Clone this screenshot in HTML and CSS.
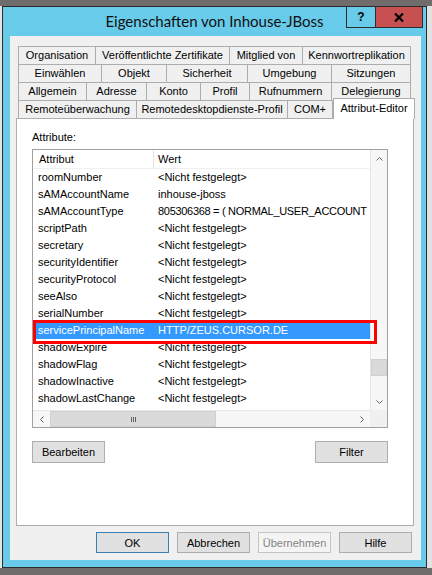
FILE: index.html
```html
<!DOCTYPE html>
<html lang="de">
<head>
<meta charset="utf-8">
<title>Eigenschaften von Inhouse-JBoss</title>
<link rel="stylesheet" href="styles.css">
</head>
<body>
<div class="screen">
  <div class="window">
    <div class="titlebar">
      <div class="tb-spacer"></div>
      <div class="title">Eigenschaften von Inhouse-JBoss</div>
      <div class="caption-btns">
        <div class="cbtn help">?</div>
        <div class="cbtn close">
          <svg width="10" height="9" viewBox="0 0 10 9"><path d="M1 0.5 L9 8.5 M9 0.5 L1 8.5" stroke="#000" stroke-width="2.2" fill="none"/></svg>
        </div>
      </div>
    </div>
    <div class="client">
      <div class="tabs">
        <div class="tabrow">
          <div class="tab w78">Organisation</div>
          <div class="tab w135">Veröffentlichte Zertifikate</div>
          <div class="tab w74">Mitglied von</div>
          <div class="tab w109">Kennwortreplikation</div>
        </div>
        <div class="tabrow">
          <div class="tab w84">Einwählen</div>
          <div class="tab w66">Objekt</div>
          <div class="tab w82">Sicherheit</div>
          <div class="tab w85">Umgebung</div>
          <div class="tab w80">Sitzungen</div>
        </div>
        <div class="tabrow">
          <div class="tab w69">Allgemein</div>
          <div class="tab w61">Adresse</div>
          <div class="tab w55">Konto</div>
          <div class="tab w50">Profil</div>
          <div class="tab w83">Rufnummern</div>
          <div class="tab w80">Delegierung</div>
        </div>
        <div class="tabrow">
          <div class="tab w119">Remoteüberwachung</div>
          <div class="tab w152">Remotedesktopdienste-Profil</div>
          <div class="tab w46">COM+</div>
          <div class="tab sel">Attribut-Editor</div>
        </div>
      </div>
      <div class="panel">
        <div class="label">Attribute:</div>
        <div class="listview">
          <div class="lv-content">
            <div class="lv-header">
              <div class="c1">Attribut</div>
              <div class="c2">Wert</div>
            </div>
            <div class="lv-rows">
              <div class="row"><div class="c1">roomNumber</div><div class="c2">&lt;Nicht festgelegt&gt;</div></div>
              <div class="row"><div class="c1">sAMAccountName</div><div class="c2">inhouse-jboss</div></div>
              <div class="row"><div class="c1">sAMAccountType</div><div class="c2 narrow">805306368 = ( NORMAL_USER_ACCOUNT</div></div>
              <div class="row"><div class="c1">scriptPath</div><div class="c2">&lt;Nicht festgelegt&gt;</div></div>
              <div class="row"><div class="c1">secretary</div><div class="c2">&lt;Nicht festgelegt&gt;</div></div>
              <div class="row"><div class="c1">securityIdentifier</div><div class="c2">&lt;Nicht festgelegt&gt;</div></div>
              <div class="row"><div class="c1">securityProtocol</div><div class="c2">&lt;Nicht festgelegt&gt;</div></div>
              <div class="row"><div class="c1">seeAlso</div><div class="c2">&lt;Nicht festgelegt&gt;</div></div>
              <div class="row"><div class="c1">serialNumber</div><div class="c2">&lt;Nicht festgelegt&gt;</div></div>
              <div class="row selected"><div class="c1">servicePrincipalName</div><div class="c2">HTTP/ZEUS.CURSOR.DE</div></div>
              <div class="row"><div class="c1">shadowExpire</div><div class="c2">&lt;Nicht festgelegt&gt;</div></div>
              <div class="row"><div class="c1">shadowFlag</div><div class="c2">&lt;Nicht festgelegt&gt;</div></div>
              <div class="row"><div class="c1">shadowInactive</div><div class="c2">&lt;Nicht festgelegt&gt;</div></div>
              <div class="row"><div class="c1">shadowLastChange</div><div class="c2">&lt;Nicht festgelegt&gt;</div></div>
            </div>
          </div>
          <div class="vscroll">
            <div class="sb-arrow"><svg width="7" height="4" viewBox="0 0 7 4"><path d="M0.5 3.5 L3.5 0.5 L6.5 3.5" stroke="#606060" fill="none"/></svg></div>
            <div class="v-track"><div class="v-thumb"></div></div>
            <div class="sb-arrow"><svg width="7" height="4" viewBox="0 0 7 4"><path d="M0.5 0.5 L3.5 3.5 L6.5 0.5" stroke="#606060" fill="none"/></svg></div>
          </div>
          <div class="hscroll">
            <div class="sb-arrow"><svg width="4" height="7" viewBox="0 0 4 7"><path d="M3.5 0.5 L0.5 3.5 L3.5 6.5" stroke="#606060" fill="none"/></svg></div>
            <div class="h-thumb"><span class="grip"></span><span class="grip"></span><span class="grip"></span></div>
            <div class="h-track"></div>
            <div class="sb-arrow"><svg width="4" height="7" viewBox="0 0 4 7"><path d="M0.5 0.5 L3.5 3.5 L0.5 6.5" stroke="#606060" fill="none"/></svg></div>
          </div>
          <div class="corner"></div>
          <div class="redbox"></div>
        </div>
        <div class="panel-btns">
          <div class="btn">Bearbeiten</div>
          <div class="btn">Filter</div>
        </div>
      </div>
      <div class="dlg-btns">
        <div class="btn default">OK</div>
        <div class="btn">Abbrechen</div>
        <div class="btn disabled">Übernehmen</div>
        <div class="btn">Hilfe</div>
      </div>
    </div>
  </div>
</div>
</body>
</html>
```
FILE: styles.css
```css
* { box-sizing: border-box; }
html, body { margin: 0; padding: 0; }
body {
  width: 432px;
  height: 575px;
  overflow: hidden;
  font-family: "Liberation Sans", Arial, sans-serif;
  font-size: 11px;
  color: #000;
}
.screen {
  height: 575px;
  padding: 6px 0 0 2px;
  background:
    linear-gradient(to bottom, #716c6c 0 6px, transparent 6px 568px, #716c6c 568px),
    linear-gradient(to right, #e6e6e6 0 2px, #716c6c 2px 427px, #e2e2e2 427px);
}
.window {
  width: 425px;
  height: 562px;
  border: 1px solid #2c2c2c;
  background: #68cbea;
  display: flex;
  flex-direction: column;
}
.titlebar {
  height: 29px;
  flex: none;
  display: grid;
  grid-template-columns: 1fr auto 1fr;
}
.title {
  font-family: Lato, "Noto Sans", sans-serif;
  font-size: 15px;
  line-height: 29px;
  color: #111;
  white-space: nowrap;
}
.caption-btns {
  justify-self: end;
  align-self: start;
  margin-right: 3px;
  display: flex;
  height: 21px;
  border: 1px solid #2c2c2c;
  border-top: 0;
}
.cbtn {
  height: 20px;
  display: flex;
  align-items: center;
  justify-content: center;
}
.help {
  width: 28px;
  font-family: "Liberation Sans", Arial, sans-serif;
  font-weight: bold;
  font-size: 12px;
}
.close {
  width: 47px;
  background: #c75050;
  border-left: 1px solid #2c2c2c;
}
.client {
  margin: 0 5px 0 7px;
  height: 524px;
  flex: none;
  background: #f0f0f0;
  padding-top: 10px;
  display: flex;
  flex-direction: column;
}
.tabs {
  padding-left: 8px;
  width: 404px;
}
.tabrow {
  display: flex;
  height: 18px;
}
.tab {
  height: 18px;
  border: 1px solid #adadad;
  border-bottom: 0;
  margin-left: -1px;
  background: #f0f0f0;
  text-align: center;
  line-height: 16px;
  white-space: nowrap;
  flex: none;
}
.tab:first-child { margin-left: 0; }
.w46 { width: 46px; } .w50 { width: 50px; } .w55 { width: 55px; } .w61 { width: 61px; }
.w66 { width: 66px; } .w69 { width: 69px; } .w74 { width: 74px; } .w78 { width: 78px; }
.w80 { width: 80px; } .w82 { width: 82px; } .w83 { width: 83px; } .w84 { width: 84px; }
.w85 { width: 85px; } .w109 { width: 109px; } .w119 { width: 119px; } .w135 { width: 135px; }
.w152 { width: 152px; }
.tab.sel {
  width: 82px;
  height: 21px;
  margin-top: -2px;
  margin-left: 0;
  background: #fff;
  position: relative;
  z-index: 2;
  line-height: 18px;
}
.panel {
  margin-left: 6px;
  width: 398px;
  height: 408px;
  background: #fff;
  border: 1px solid #adadad;
  padding: 12px 0 0 15px;
}
.label {
  line-height: 13px;
  height: 13px;
  margin-bottom: 5px;
}
.listview {
  position: relative;
  width: 356px;
  height: 279px;
  border: 1px solid #a0a0a0;
  display: grid;
  grid-template-columns: 337px 17px;
  grid-template-rows: 260px 17px;
}
.lv-content {
  overflow: hidden;
  background: #fff;
}
.lv-header {
  display: flex;
  height: 19px;
  line-height: 18px;
  border-bottom: 1px solid #f0f0f0;
}
.lv-header .c1 {
  width: 121px;
  padding-left: 6px;
  border-right: 1px solid #e5e5e5;
}
.lv-header .c2 { padding-left: 4px; }
.lv-rows { height: 241px; overflow: hidden; }
.row {
  display: flex;
  height: 17px;
  line-height: 17px;
  white-space: nowrap;
}
.row .c1 { width: 121px; padding-left: 5px; flex: none; }
.row .c2 { padding-left: 4px; flex: none; }
.row .c2.narrow { letter-spacing: -0.3px; }
.row.selected { background: #3399ff; color: #fff; }
.vscroll {
  background: #f7f7f7;
  border-left: 1px solid #e6e6e6;
  display: flex;
  flex-direction: column;
}
.sb-arrow {
  width: 16px;
  height: 17px;
  flex: none;
  display: flex;
  align-items: center;
  justify-content: center;
}
.v-track { flex: 1; }
.v-thumb {
  margin-top: 192px;
  height: 17px;
  background: #dadada;
  border: 1px solid #d0d0d0;
}
.hscroll {
  background: #f7f7f7;
  border-top: 1px solid #e6e6e6;
  display: flex;
}
.hscroll .sb-arrow { width: 17px; height: 16px; }
.h-thumb {
  width: 166px;
  background: #dadada;
  border: 1px solid #d0d0d0;
  display: flex;
  align-items: center;
  justify-content: center;
  gap: 1px;
}
.grip {
  width: 1px;
  height: 5px;
  background: #606060;
}
.h-track { flex: 1; }
.corner { background: #f0f0f0; }
.redbox {
  position: absolute;
  left: 0;
  top: 170px;
  width: 344px;
  height: 24px;
  border: 3px solid #ff0000;
}
.panel-btns {
  width: 356px;
  margin-top: 13px;
  display: flex;
  justify-content: space-between;
}
.btn {
  width: 73px;
  height: 22px;
  background: #e1e1e1;
  border: 1px solid #adadad;
  display: flex;
  align-items: center;
  justify-content: center;
}
.dlg-btns {
  margin-top: 6px;
  padding-right: 9px;
  display: flex;
  justify-content: flex-end;
  gap: 8px;
}
.dlg-btns .btn { height: 21px; }
.btn.default { border-color: #3c7fb1; }
.btn.disabled {
  background: #f4f4f4;
  border-color: #c4c4c4;
  color: #838383;
}
```
